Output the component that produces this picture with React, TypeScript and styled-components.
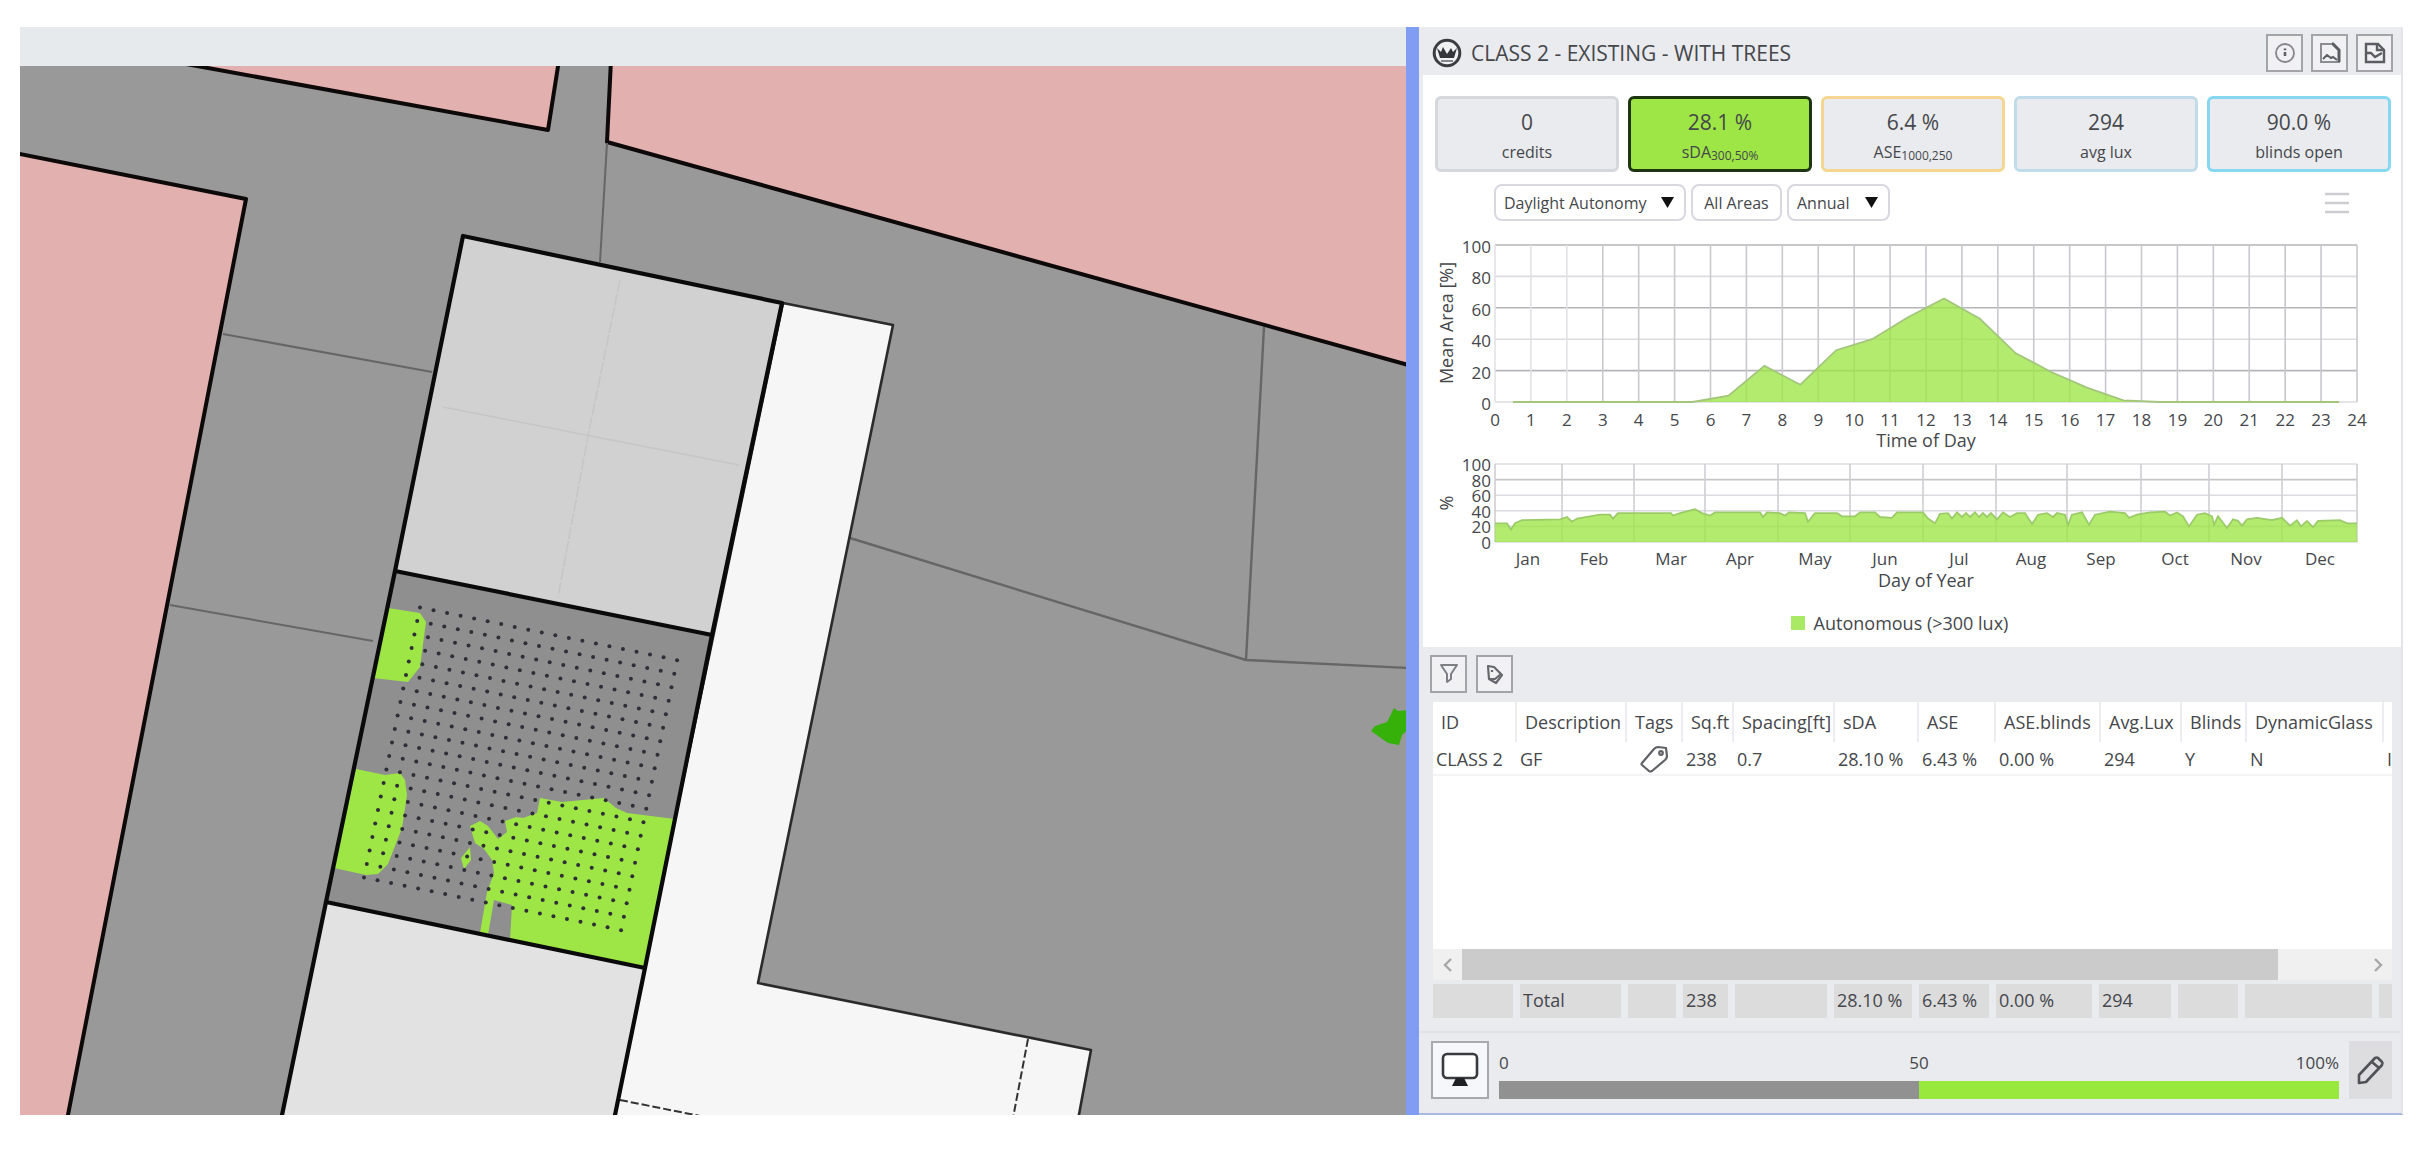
import React from "react";
import styled, { createGlobalStyle } from "styled-components";

const Global = createGlobalStyle`
  *, *::before, *::after { box-sizing: border-box; }
  body { margin: 0; background: #fff; color: #45474b; font-family: "Open Sans", "Noto Sans", sans-serif; }
  button, select { font: inherit; color: inherit; }
`;

const LIME = "#9de645";

/* ---------- shell ---------- */

const Shell = styled.main`
  display: grid;
  grid-template-columns: 1386fr 13px 984fr;
  height: 100vh;
  min-height: 1000px;
  padding: 27px 30px 42px 20px;
`;

const Viewer = styled.section`
  display: flex;
  flex-direction: column;
  min-width: 0;
  min-height: 0;
`;

const ViewerBar = styled.div`
  flex: none;
  height: 39px;
  background: #e7eaed;
`;

const Plan = styled.svg`
  display: block;
  flex: 1;
  width: 100%;
  min-height: 0;
  background: #999;
`;

const Splitter = styled.div`
  background: #819cf3;
`;

const Panel = styled.section`
  display: flex;
  flex-direction: column;
  min-width: 0;
  background: #e9ebee;
  border-right: 2px solid #e4e4ea;
  border-bottom: 2px solid #a9b8e0;
`;

/* ---------- header ---------- */

const Header = styled.header`
  display: flex;
  flex: none;
  align-items: center;
  gap: 9px;
  height: 48px;
  padding: 4px 8px 0 13px;
`;

const Title = styled.h1`
  flex: 1;
  margin: 0;
  font-size: 21px;
  font-weight: 400;
  line-height: 28px;
`;

const ButtonRow = styled.div`
  display: flex;
  gap: 8px;
`;

const IconButton = styled.button`
  display: grid;
  place-items: center;
  width: 37px;
  height: 38px;
  padding: 0;
  border: 2px solid #a3a4a8;
  background: #f1f1f4;
`;

/* ---------- results ---------- */

const Results = styled.div`
  display: flex;
  flex: none;
  flex-direction: column;
  height: 572px;
  margin-left: 4px;
  padding: 21px 10px 0 12px;
  background: #fff;
`;

const Cards = styled.div`
  display: grid;
  grid-template-columns: repeat(5, 1fr);
  gap: 9px;
`;

const Card = styled.button<{ $edge: string; $fill?: string }>`
  display: flex;
  flex-direction: column;
  align-items: center;
  justify-content: flex-end;
  height: 76px;
  padding: 0 0 3px;
  border: 3px solid ${(p) => p.$edge};
  border-radius: 6px;
  background: ${(p) => p.$fill ?? "#e9ebee"};
`;

const CardValue = styled.span`
  font-size: 21px;
  line-height: 32px;
`;

const CardLabel = styled.span`
  font-size: 16px;
  line-height: 28px;
  sub { font-size: 12px; line-height: 0; vertical-align: -2px; }
`;

const Controls = styled.div`
  display: flex;
  align-items: center;
  gap: 5px;
  margin-top: 12px;
  padding: 0 42px 0 59px;
`;

const SelectBox = styled.div<{ $width: number }>`
  position: relative;
  width: ${(p) => p.$width}px;
  svg { position: absolute; right: 12px; top: 12px; pointer-events: none; }
`;

const Select = styled.select`
  appearance: none;
  width: 100%;
  height: 37px;
  padding: 0 8px;
  border: 2px solid #d8d8e1;
  border-radius: 8px;
  background: #fff;
  font-size: 16px;
`;

const AreasButton = styled.button`
  height: 37px;
  width: 91px;
  padding: 0;
  border: 2px solid #d8d8e1;
  border-radius: 8px;
  background: #fff;
  font-size: 16px;
`;

const MenuButton = styled.button`
  display: grid;
  width: 24px;
  height: 24px;
  margin-left: auto;
  padding: 0;
  border: 0;
  background: none;
`;

const ChartSvg = styled.svg`
  display: block;
  width: 100%;
  height: auto;
  margin-top: 4px;
  overflow: visible;
  font-size: 17px;
  fill: #45474b;
`;

const Legend = styled.div`
  display: flex;
  align-items: center;
  justify-content: center;
  gap: 9px;
  padding-right: 27px;
  font-size: 18px;
  line-height: 46px;
`;

const Swatch = styled.span`
  width: 14px;
  height: 14px;
  background: #a9e963;
`;

/* ---------- table ---------- */

const Toolbar = styled.div`
  display: flex;
  flex: none;
  align-items: center;
  gap: 9px;
  height: 55px;
  padding: 0 11px 2px;
`;

const GridArea = styled.div`
  flex: 1;
  min-height: 0;
  margin: 0 9px 0 14px;
  overflow: hidden;
  background: #fff;
`;

const DataTable = styled.table`
  width: 100%;
  table-layout: fixed;
  border-collapse: separate;
  border-spacing: 0;
  font-size: 18px;
  text-align: left;
  white-space: nowrap;
`;

const HeadCell = styled.th`
  height: 40px;
  padding: 0 0 0 8px;
  border-right: 2px solid #ededf1;
  font-weight: 400;
  font-size: 18px;
  &:last-child { border-right: 0; }
`;

const Cell = styled.td`
  height: 34px;
  padding: 2px 0 0 3px;
  border-bottom: 2px solid #f4f4f6;
  svg { display: block; margin-left: 10px; }
`;

const TotalCell = styled.td`
  height: 34px;
  padding: 0 0 2px 3px;
  border-right: 7px solid #e9ebee;
  background: #dcdcdd;
  &:last-child { border-right: 0; }
`;

const ScrollBar = styled.div`
  display: flex;
  flex: none;
  height: 31px;
  margin: 0 9px 4px 14px;
  background: #f0f0f0;
`;

const ScrollArrow = styled.button`
  display: grid;
  place-items: center;
  width: 29px;
  padding: 0;
  border: 0;
  background: none;
`;

const ScrollTrack = styled.div`
  display: grid;
  flex: 1;
  grid-template-columns: 816fr 85fr;
`;

const ScrollThumb = styled.div`
  background: #cbcbcb;
`;

const Totals = styled.div`
  flex: none;
  margin: 0 9px 13px 14px;
`;

/* ---------- footer ---------- */

const Footer = styled.footer`
  display: flex;
  flex: none;
  gap: 10px;
  height: 82px;
  padding: 8px 9px 14px 12px;
  border-top: 2px solid #e1e2e7;
`;

const DisplayButton = styled.button`
  display: grid;
  place-items: center;
  width: 58px;
  height: 58px;
  padding: 0;
  border: 2px solid #a8a9ad;
  background: #f6f7fa;
`;

const EditButton = styled.button`
  display: grid;
  place-items: center;
  width: 43px;
  height: 58px;
  padding: 0;
  border: 0;
  background: #dddde0;
`;

const Scale = styled.div`
  display: flex;
  flex: 1;
  flex-direction: column;
  justify-content: space-between;
  height: 58px;
  padding-top: 10px;
`;

const ScaleLabels = styled.div`
  display: grid;
  grid-template-columns: 1fr auto 1fr;
  font-size: 17px;
  line-height: 24px;
  span:last-child { text-align: right; }
`;

const ScaleBar = styled.div`
  display: grid;
  grid-template-columns: 1fr 1fr;
  height: 18px;
`;

const ScalePart = styled.div<{ $color: string }>`
  background: ${(p) => p.$color};
`;

/* ---------- icons ---------- */

const Logo = () => (
  <svg width="30" height="30" viewBox="0 0 30 30" aria-hidden="true">
    <circle cx="15" cy="15" r="12.8" fill="#f0f1f3" stroke="#3b3d42" strokeWidth="3" />
    <path d="M5 10l3 10h14l3-10-4 4-2-4-4 6-4-7-2 5z" fill="#34363b" />
    <path d="M9 23h12" stroke="#6b6d72" strokeWidth="1.6" />
  </svg>
);

const InfoIcon = () => (
  <svg width="24" height="24" viewBox="0 0 24 24" fill="none" stroke="#85878c" strokeWidth="1.8">
    <circle cx="12" cy="12" r="9" />
    <path d="M12 11v4M12 7.5v1.8" strokeWidth="2.6" stroke="#606267" />
  </svg>
);

const ImageFileIcon = () => (
  <svg width="24" height="24" viewBox="0 0 24 24" fill="none" stroke="#5b5d62" strokeWidth="2">
    <path d="M3 3h12l6 6v12H3z" stroke="#8b8d91" />
    <path d="M14 3h1l6 6v12" strokeWidth="3" />
    <path d="M5 18l4-4 4 3 2-1 4 3" />
  </svg>
);

const CheckFileIcon = () => (
  <svg width="24" height="24" viewBox="0 0 24 24" fill="none" stroke="#5b5d62" strokeWidth="2.4">
    <path d="M3 3h12l6 6v12H3z" />
    <path d="M14 3v6h7M4 12h4l4 4 7-4" />
  </svg>
);

const FilterIcon = () => (
  <svg width="22" height="22" viewBox="0 0 22 22" fill="none" stroke="#7d7f84" strokeWidth="2" strokeLinejoin="round">
    <path d="M3 2h16l-6 9v5l-4 3v-8z" />
  </svg>
);

const TagEditIcon = () => (
  <svg width="22" height="22" viewBox="0 0 22 22" fill="none" stroke="#66686d" strokeWidth="2.2" strokeLinejoin="round">
    <path d="M4 3l6 1 8 8-6 8-7-4z" />
    <path d="M5 16h6l6-5" />
    <path d="M8 7v2" />
  </svg>
);

const TagIcon = () => (
  <svg width="28" height="28" viewBox="0 0 28 28" fill="none" stroke="#606267" strokeWidth="2.2" strokeLinejoin="round">
    <path d="M2 18L14 4q2-2 4-2l8 1 1 8q0 2-2 4L12 26q-2 1-3 0l-7-6q-1-1 0-2z" />
    <circle cx="21" cy="8" r="1.8" />
  </svg>
);

const MonitorIcon = () => (
  <svg width="38" height="36" viewBox="0 0 38 36">
    <rect x="2" y="2" width="34" height="24" rx="4" fill="#fff" stroke="#3a3b3f" strokeWidth="2.6" />
    <path d="M15 26h8l4 8H11z" fill="#1f2023" />
  </svg>
);

const PencilIcon = () => (
  <svg width="30" height="30" viewBox="0 0 30 30" fill="none" stroke="#505257" strokeWidth="2.6" strokeLinejoin="round">
    <path d="M3 20L19 3q2-1 3 0l4 4q1 1 0 3L10 27l-7 1z" />
    <path d="M16 7l7 6" />
  </svg>
);

const Caret = () => (
  <svg width="13" height="12" viewBox="0 0 13 12" aria-hidden="true">
    <path d="M0 1h13L6.5 12z" fill="#111" />
  </svg>
);

const Chevron = ({ d }: { d: string }) => (
  <svg width="12" height="16" viewBox="0 0 12 16" fill="none" stroke="#a8a8a8" strokeWidth="2.4">
    <path d={d} />
  </svg>
);

/* ---------- floor plan ---------- */

const sensors: [number, number][] = [];
for (let row = 0; row < 21; row++) {
  for (let col = 0; col < 20; col++) {
    sensors.push([420 + col * 13.53 - row * 2.8, 607.5 + col * 2.77 + row * 13.5]);
  }
}

const FloorPlan = () => (
  <Plan viewBox="20 66 1386 1049" preserveAspectRatio="xMidYMid slice" role="img" aria-label="Floor plan">
    <g fill="#e2b1af" stroke="#0d0909" strokeWidth="4" strokeLinejoin="round">
      <path d="M186 64L548 130L559 60" />
      <path d="M611 60L607 142L1412 366V50z" />
      <path d="M10 152L246 199L67 1120H10z" />
    </g>
    <g fill="none" stroke="#666" strokeWidth="2">
      <path d="M607 143L600 262" />
      <path d="M223 334L432 372M170 605L373 641" />
      <path d="M1264 327L1246 660M850 538L1246 660L1408 668" strokeWidth="2.4" />
    </g>
    <path d="M783 303L893 325L758 983L1091 1050L1078 1120H612z" fill="#f6f6f6" stroke="#2b2b2b" strokeWidth="2.6" strokeLinejoin="round" />
    <path d="M1028 1039L1013 1118M620 1100L700 1116" stroke="#333" strokeWidth="2" strokeDasharray="8 3" />
    <path d="M463 236L782 303L712 635L395 571z" fill="#d1d1d1" />
    <path d="M395 571L712 635L645 968L327 902z" fill="#8f8f8f" />
    <path d="M327 902L645 968L614 1120H282z" fill="#e2e2e2" />
    <g fill="none" stroke="#c6c6c6" strokeWidth="1.6">
      <path d="M620 280L588 436L558 597" strokeDasharray="12 2" />
      <path d="M443 407L739 465" />
    </g>
    <g fill={LIME}>
      <path d="M388 608L420 613L426 622L420 667L408 682L373 678z" />
      <path d="M356 769L385 775L400 773L405 780L407 795L402 828L388 864L378 874L366 875L334 868z" />
      <path d="M540 798L562 802L604 798L616 808L627 813L675 819L645 967L510 940L512 905L494 900L488 935L480 933L487 892L494 873L492 860L484 849L475 843L470 826L480 821L488 826L498 839L507 832L505 821L516 817L523 818L537 813z" />
      <path d="M470 847L461 858L464 869L471 860z" />
    </g>
    <g fill="#2e2f36">
      {sensors.map(([x, y]) => (
        <circle key={`${x}-${y}`} cx={x} cy={y} r="2" />
      ))}
    </g>
    <g fill="none" stroke="#0a0a0a" strokeWidth="4.2" strokeLinejoin="round">
      <path d="M281 1120L326 902L395 571L463 236L782 303L712 635L645 968L614 1120" />
      <path d="M395 571L712 635M326 902L645 968" />
    </g>
    <path d="M1394 708L1398 711L1410 710V728L1402 735L1399 745L1388 743L1371 731L1375 726L1387 722z" fill="#35b10a" />
  </Plan>
);

/* ---------- charts ---------- */

const PLOT_X = 60;
const PLOT_W = 862;
const HOUR = PLOT_W / 24;
const DAY_TOP = 20;
const DAY_H = 157;
const YEAR_TOP = 239;
const YEAR_H = 78;
const levels = [0, 20, 40, 60, 80, 100];

const hourly = [0, 0, 0, 0, 0, 0, 4, 23, 11, 33, 40, 54, 66, 53, 31, 19, 9, 1, 0, 0, 0, 0, 0, 0];

const months: [string, number, number][] = [
  ["Jan", 0, 33], ["Feb", 67, 99], ["Mar", 139, 176], ["Apr", 210, 245], ["May", 283, 320], ["Jun", 355, 390],
  ["Jul", 428, 464], ["Aug", 501, 536], ["Sep", 572, 606], ["Oct", 646, 680], ["Nov", 714, 751], ["Dec", 787, 825],
];

const daily: [number, number][] = [
  [0, 24], [12, 24], [16, 16], [20, 24], [27, 28], [65, 29], [72, 32], [77, 26], [82, 30], [105, 35], [115, 35],
  [118, 30], [123, 37], [176, 37], [178, 34], [185, 37], [200, 42], [207, 37], [215, 34], [220, 38], [265, 38],
  [268, 32], [272, 38], [285, 37], [290, 34], [294, 38], [310, 37], [313, 26], [320, 37], [342, 37], [347, 33],
  [360, 33], [365, 38], [380, 38], [385, 32], [397, 31], [402, 38], [428, 38], [433, 30], [440, 24], [445, 36],
  [453, 37], [457, 30], [462, 38], [467, 32], [471, 37], [475, 32], [480, 38], [484, 32], [488, 37], [492, 32],
  [496, 37], [502, 29], [508, 38], [515, 32], [522, 37], [530, 37], [537, 23], [543, 35], [552, 37], [558, 32],
  [562, 37], [570, 35], [573, 22], [577, 35], [587, 38], [594, 22], [600, 35], [615, 39], [630, 37], [634, 31],
  [642, 35], [655, 38], [670, 39], [675, 34], [682, 38], [688, 33], [694, 20], [702, 35], [710, 37], [717, 33],
  [719, 22], [723, 33], [732, 18], [738, 29], [743, 27], [747, 21], [752, 29], [762, 31], [777, 28], [787, 31],
  [795, 21], [802, 28], [806, 20], [812, 27], [818, 19], [823, 27], [845, 28], [852, 24], [862, 24],
];

const toLine = (points: [number, number][], top: number, height: number) =>
  "M" + points.map(([x, v]) => `${(PLOT_X + x).toFixed(1)} ${(top + height - (v * height) / 100).toFixed(1)}`).join("L");

const dayLine = toLine(hourly.map((v, i): [number, number] => [(i + 0.5) * HOUR, v]), DAY_TOP, DAY_H);
const yearLine = toLine(daily, YEAR_TOP, YEAR_H);

const Charts = () => (
  <ChartSvg viewBox="0 0 956 375" role="img" aria-label="Daylight autonomy by hour and by day">
    <g stroke="#cfcfd3" strokeWidth="1.6">
      {levels.map((v) => (
        <path key={v} d={`M${PLOT_X} ${DAY_TOP + DAY_H - (v * DAY_H) / 100}h${PLOT_W}`} stroke={v === 60 || v === 20 || v === 100 ? "#b5b5b9" : "#dcdce0"} />
      ))}
      {Array.from({ length: 25 }, (_, h) => (
        <path key={h} d={`M${PLOT_X + h * HOUR} ${DAY_TOP}v${DAY_H}`} stroke={h < 3 ? "#e2e2e6" : "#c8c8cd"} />
      ))}
      {levels.map((v) => (
        <path key={v} d={`M${PLOT_X} ${YEAR_TOP + YEAR_H - (v * YEAR_H) / 100}h${PLOT_W}`} stroke={v === 80 ? "#c6c6ca" : "#dcdce0"} />
      ))}
      {[...months.map((m) => m[1]), PLOT_W].map((x) => (
        <path key={x} d={`M${PLOT_X + x} ${YEAR_TOP}v${YEAR_H}`} />
      ))}
    </g>
    <path d={`${dayLine}V${DAY_TOP + DAY_H}H${PLOT_X}z`} fill={LIME} fillOpacity="0.78" />
    <path d={dayLine} fill="none" stroke="#a4c67c" strokeWidth="1.8" />
    <path d={`${yearLine}V${YEAR_TOP + YEAR_H}H${PLOT_X}z`} fill={LIME} fillOpacity="0.78" />
    <path d={yearLine} fill="none" stroke="#9ccb69" strokeWidth="1.8" />
    <g textAnchor="end">
      {levels.map((v) => (
        <text key={v} x="56" y={DAY_TOP + DAY_H + 8 - (v * DAY_H) / 100}>{v}</text>
      ))}
      {levels.map((v) => (
        <text key={v} x="56" y={YEAR_TOP + YEAR_H + 7 - (v * YEAR_H) / 100}>{v}</text>
      ))}
    </g>
    <g textAnchor="middle">
      {Array.from({ length: 25 }, (_, h) => (
        <text key={h} x={PLOT_X + h * HOUR} y="201">{h}</text>
      ))}
      {months.map(([name, , x]) => (
        <text key={name} x={PLOT_X + x} y="340">{name}</text>
      ))}
      <g fontSize="18">
        <text x="491" y="222">Time of Day</text>
        <text x="491" y="362">Day of Year</text>
        <text transform="translate(18 98) rotate(-90)">Mean Area [%]</text>
        <text transform="translate(18 278) rotate(-90)">%</text>
      </g>
    </g>
  </ChartSvg>
);

/* ---------- table data ---------- */

const headings = [
  "ID", "Description", "Tags", "Sq.ft", "Spacing[ft]", "sDA", "ASE", "ASE.blinds", "Avg.Lux", "Blinds", "DynamicGlass", "",
];
const gridWidths = [84, 110, 56, 51, 101, 84, 77, 105, 81, 65, 137];
const totalWidths = [87, 108, 55, 52, 99, 85, 77, 103, 79, 67, 134];

const record = ["CLASS 2", "GF", <TagIcon key="tag" />, "238", "0.7", "28.10 %", "6.43 %", "0.00 %", "294", "Y", "N", "I"];
const totals = ["", "Total", "", "238", "", "28.10 %", "6.43 %", "0.00 %", "294", "", "", ""];

const Columns = ({ widths }: { widths: number[] }) => (
  <colgroup>
    {widths.map((width, i) => (
      <col key={i} width={width} />
    ))}
    <col />
  </colgroup>
);

export default function App() {
  return (
    <>
      <Global />
      <Shell>
        <Viewer>
          <ViewerBar />
          <FloorPlan />
        </Viewer>
        <Splitter />
        <Panel>
          <Header>
            <Logo />
            <Title>CLASS 2 - EXISTING - WITH TREES</Title>
            <ButtonRow>
              <IconButton aria-label="Information"><InfoIcon /></IconButton>
              <IconButton aria-label="Save image"><ImageFileIcon /></IconButton>
              <IconButton aria-label="Save report"><CheckFileIcon /></IconButton>
            </ButtonRow>
          </Header>

          <Results>
            <Cards>
              <Card $edge="#d4d7dc">
                <CardValue>0</CardValue>
                <CardLabel>credits</CardLabel>
              </Card>
              <Card $edge="#1d3510" $fill={LIME}>
                <CardValue>28.1 %</CardValue>
                <CardLabel>sDA<sub>300,50%</sub></CardLabel>
              </Card>
              <Card $edge="#f4d690">
                <CardValue>6.4 %</CardValue>
                <CardLabel>ASE<sub>1000,250</sub></CardLabel>
              </Card>
              <Card $edge="#c0dcea">
                <CardValue>294</CardValue>
                <CardLabel>avg lux</CardLabel>
              </Card>
              <Card $edge="#86d8f0">
                <CardValue>90.0 %</CardValue>
                <CardLabel>blinds open</CardLabel>
              </Card>
            </Cards>
            <Controls>
              <SelectBox $width={192}>
                <Select aria-label="Metric"><option>Daylight Autonomy</option></Select>
                <Caret />
              </SelectBox>
              <AreasButton>All Areas</AreasButton>
              <SelectBox $width={103}>
                <Select aria-label="Period"><option>Annual</option></Select>
                <Caret />
              </SelectBox>
              <MenuButton aria-label="Chart menu">
                <svg width="24" height="24" viewBox="0 0 24 24" stroke="#cdcdd1" strokeWidth="2.6">
                  <path d="M0 3h24M0 12h24M0 21h24" />
                </svg>
              </MenuButton>
            </Controls>
            <Charts />
            <Legend><Swatch />Autonomous (&gt;300 lux)</Legend>
          </Results>

          <Toolbar>
            <IconButton aria-label="Filter"><FilterIcon /></IconButton>
            <IconButton aria-label="Edit tags"><TagEditIcon /></IconButton>
          </Toolbar>

          <GridArea>
            <DataTable>
              <Columns widths={gridWidths} />
              <thead>
                <tr>{headings.map((name) => <HeadCell key={name}>{name}</HeadCell>)}</tr>
              </thead>
              <tbody>
                <tr>{record.map((value, i) => <Cell key={i}>{value}</Cell>)}</tr>
              </tbody>
            </DataTable>
          </GridArea>
          <ScrollBar>
            <ScrollArrow aria-label="Scroll left"><Chevron d="M9 2L3 8l6 6" /></ScrollArrow>
            <ScrollTrack><ScrollThumb /></ScrollTrack>
            <ScrollArrow aria-label="Scroll right"><Chevron d="M3 2l6 6-6 6" /></ScrollArrow>
          </ScrollBar>
          <Totals>
            <DataTable>
              <Columns widths={totalWidths} />
              <tbody>
                <tr>{totals.map((value, i) => <TotalCell key={i}>{value}</TotalCell>)}</tr>
              </tbody>
            </DataTable>
          </Totals>

          <Footer>
            <DisplayButton aria-label="Display"><MonitorIcon /></DisplayButton>
            <Scale>
              <ScaleLabels><span>0</span><span>50</span><span>100%</span></ScaleLabels>
              <ScaleBar>
                <ScalePart $color="#919191" />
                <ScalePart $color="#99e83e" />
              </ScaleBar>
            </Scale>
            <EditButton aria-label="Edit scale"><PencilIcon /></EditButton>
          </Footer>
        </Panel>
      </Shell>
    </>
  );
}
